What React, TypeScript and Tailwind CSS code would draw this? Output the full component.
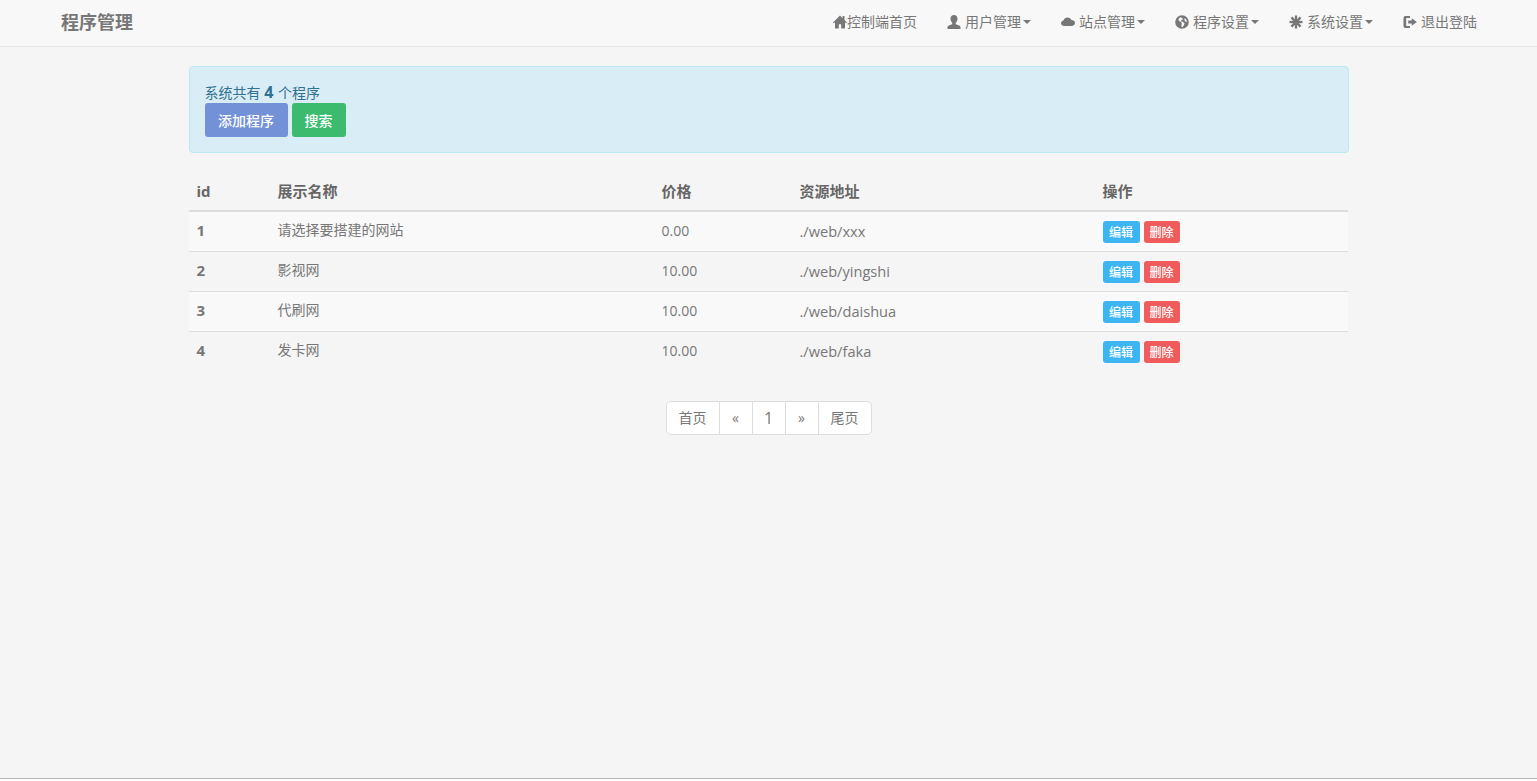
import type { ReactNode } from 'react';

const font = { fontFamily: '"Open Sans", "Noto Sans CJK SC", sans-serif' };

function Glyph({ children }: { children: ReactNode }) {
  return (
    <svg viewBox="0 0 14 14" className="w-[14px] h-[14px] fill-current shrink-0">
      {children}
    </svg>
  );
}

const HomeIcon = () => (
  <Glyph>
    <path d="M7 .5 0 7.400l.8.9L2 7.200V13.500h3.800V9.200h2.400v4.300H12V7.200l1.200 1.100.8-.9L11.500 5V1h-1.900v2.200z" />
  </Glyph>
);
const UserIcon = () => (
  <Glyph>
    <path d="M7 0c2.200 0 3.500 1.600 3.500 3.800 0 1.700-.8 3.200-1.700 3.900v1.500c1.900.6 4.200 1.200 4.700 2.500V14H.5v-2.300c.5-1.300 2.800-1.900 4.700-2.500V7.700C4.300 7 3.500 5.500 3.500 3.800 3.500 1.600 4.800 0 7 0z" />
  </Glyph>
);
const CloudIcon = () => (
  <Glyph>
    <path d="M3.200 11C1.400 11 0 9.800 0 8.200c0-1.400 1.100-2.600 2.500-2.800C3 3.700 4.600 2.500 6.500 2.500c1.800 0 3.300 1 3.900 2.600 2 0 3.600 1.300 3.600 3S12.500 11 10.600 11z" />
  </Glyph>
);
const GlobeIcon = () => (
  <Glyph>
    <path
      fillRule="evenodd"
      d="M7 .2a6.800 6.800 0 1 1 0 13.600A6.800 6.800 0 0 1 7 .2zM5.500 2.300 3.300 4l.6 2 2.300.9.7 2-.7 1.600 1 2 1.500-1.800.9-2.400-2-1.500-1.600-.4.3-1.300 1.500-.3-.3-1.600zM10 3.200l-.8 1.300 1.300 2.200 1.400.2c-.1-1.500-.8-2.900-1.900-3.700z"
    />
  </Glyph>
);
const AsteriskIcon = () => (
  <Glyph>
    <g className="stroke-current" strokeWidth="2.300">
      <line x1="7" y1="0.500" x2="7" y2="13.500" />
      <line x1="0.500" y1="7" x2="13.500" y2="7" />
      <line x1="2.400" y1="2.400" x2="11.600" y2="11.600" />
      <line x1="11.600" y1="2.400" x2="2.400" y2="11.600" />
    </g>
  </Glyph>
);
const LogoutIcon = () => (
  <Glyph>
    <path d="M2.300 1H7v2H3.200v8H7v2H2.300A1.800 1.800 0 0 1 .5 11.200V2.800A1.800 1.800 0 0 1 2.300 1zM8.800 3.200 13.800 7l-5 3.800V8.400H5.200V5.600h3.600z" />
  </Glyph>
);

const Caret = () => (
  <span className="inline-block ml-[2px] w-0 h-0 border-x-[4px] border-x-transparent border-t-[4px] border-t-[#777]" />
);

const navItems = [
  { label: '控制端首页', icon: <HomeIcon />, caret: false, textClass: '' },
  { label: '用户管理', icon: <UserIcon />, caret: true, textClass: 'ml-1' },
  { label: '站点管理', icon: <CloudIcon />, caret: true, textClass: 'ml-1' },
  { label: '程序设置', icon: <GlobeIcon />, caret: true, textClass: 'ml-1' },
  { label: '系统设置', icon: <AsteriskIcon />, caret: true, textClass: 'ml-1' },
  { label: '退出登陆', icon: <LogoutIcon />, caret: false, textClass: 'ml-1' },
];

const programs = [
  { id: 1, name: '请选择要搭建的网站', price: '0.00', path: './web/xxx' },
  { id: 2, name: '影视网', price: '10.00', path: './web/yingshi' },
  { id: 3, name: '代刷网', price: '10.00', path: './web/daishua' },
  { id: 4, name: '发卡网', price: '10.00', path: './web/faka' },
];

const pages = [
  { label: '首页', width: 'w-[53px]' },
  { label: '«', width: 'w-[33px]' },
  { label: '1', width: 'w-[33px] text-[16px]' },
  { label: '»', width: 'w-[33px]' },
  { label: '尾页', width: 'w-[52px]' },
];

export default function App() {
  return (
    <div
      style={font}
      className="min-h-[779px] bg-[#f5f5f5] border-b border-[#b5b5b5] text-[14px] leading-[20px] text-[#777]"
    >
      <nav className="h-[47px] pb-[2px] bg-[#f8f8f8] border-b border-[#e7e7e7] flex items-center justify-between pl-[46px] pr-[45px]">
        <a className="px-[15px] text-[18px] font-bold text-[#777]">程序管理</a>
        <ul className="flex items-center">
          {navItems.map((item) => (
            <li key={item.label} className="flex items-center px-[15px]">
              {item.icon}
              <span className={item.textClass}>{item.label}</span>
              {item.caret && <Caret />}
            </li>
          ))}
        </ul>
      </nav>

      <main className="w-[1160px] mx-auto pt-[19px]">
        <div className="h-[87px] p-[15px] bg-[#d9edf7] border border-[#bce8f1] rounded text-[#31708f]">
          <div className="h-[21px] flex items-end">
            <span className="whitespace-pre">
              系统共有 <b className="text-[16px]">4</b> <span className="ml-[1px]">个程序</span>
            </span>
          </div>
          <div className="flex gap-1">
            <button className="h-[34px] w-[83px] pt-[1px] rounded-[3px] bg-[#7391d6] text-white font-medium">添加程序</button>
            <button className="h-[34px] w-[54px] pt-[1px] rounded-[3px] bg-[#3cbb6f] text-white font-medium">搜索</button>
          </div>
        </div>

        <table className="w-[1159px] table-fixed mt-[19px] border-collapse">
          <thead>
            <tr className="h-[39px] border-b-2 border-[#ddd] text-left text-[15px] text-[#666]">
              <th className="w-[81px] px-2 font-bold">id</th>
              <th className="w-[384px] px-2 font-bold">展示名称</th>
              <th className="w-[138px] px-2 font-bold">价格</th>
              <th className="w-[303px] px-2 font-bold">资源地址</th>
              <th className="px-2 font-bold">操作</th>
            </tr>
          </thead>
          <tbody>
            {programs.map((p) => (
              <tr key={p.id} className="h-[40px] border-t border-[#ddd] first:border-t-0 odd:bg-[#f9f9f9]">
                <td className="px-2 pb-[2px] font-bold text-[15px]">{p.id}</td>
                <td className="px-2 pb-[2px]">{p.name}</td>
                <td className="px-2">{p.price}</td>
                <td className="px-2 text-[14.6px]">{p.path}</td>
                <td className="px-2">
                  <div className="flex gap-1 pt-[2px]">
                    <button className="h-[22px] w-[37px] pt-[1px] rounded-[3px] bg-[#3db5f2] text-white text-[12px] font-medium">编辑</button>
                    <button className="h-[22px] w-[36px] pt-[1px] rounded-[3px] bg-[#f05b5b] text-white text-[12px] font-medium">删除</button>
                  </div>
                </td>
              </tr>
            ))}
          </tbody>
        </table>

        <div className="flex justify-center mt-[30px]">
          <ul className="flex h-[34px] bg-white border border-[#ddd] rounded-[5px] divide-x divide-[#ddd]">
            {pages.map((page) => (
              <li key={page.label} className={`flex items-center justify-center ${page.width}`}>
                {page.label}
              </li>
            ))}
          </ul>
        </div>
      </main>
    </div>
  );
}
